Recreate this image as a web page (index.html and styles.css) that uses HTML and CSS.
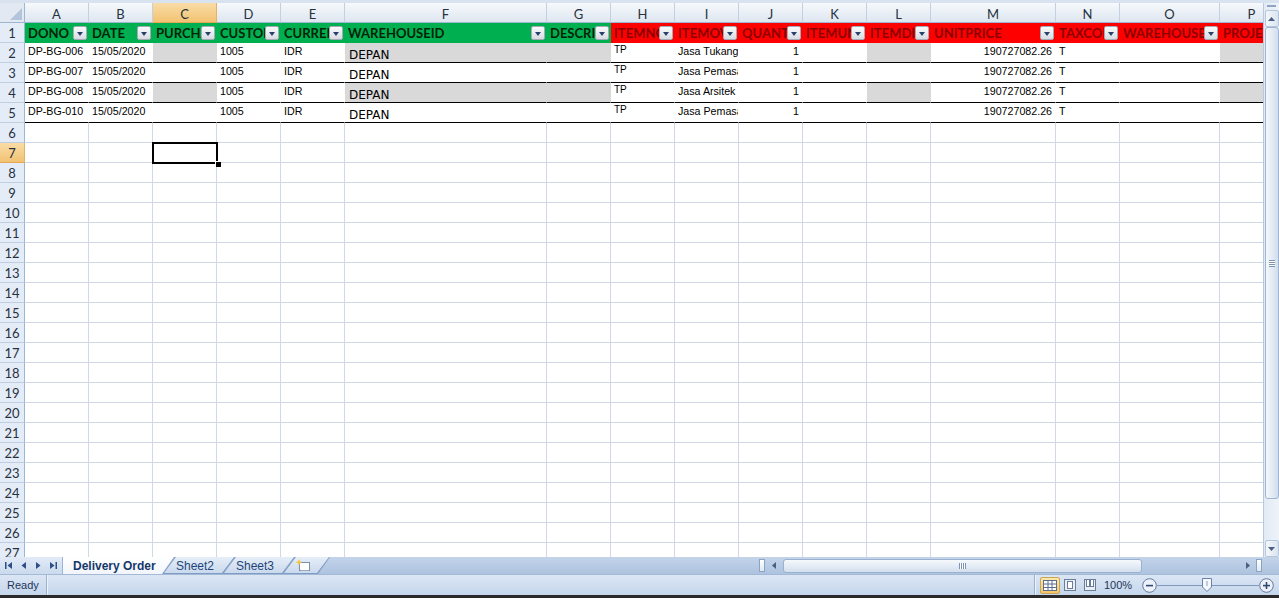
FILE: index.html
```html
<!DOCTYPE html>
<html lang="id">
  <head>
    <meta charset="UTF-8" />
    <title>Delivery Order</title>
    <link rel="stylesheet" href="styles.css">
  </head>

  <body>
    <div class="app">
      <div class="topstrip"></div>

      <div class="main">
        <div class="sheet">
          <table class="grid">
            <colgroup>
              <col class="w25"><col class="w64"><col class="w64"><col class="w64"><col class="w64"><col class="w64">
              <col class="w202"><col class="w64"><col class="w64"><col class="w64"><col class="w64"><col class="w64">
              <col class="w64"><col class="w125"><col class="w64"><col class="w100"><col class="w64">
            </colgroup>
            <thead>
              <tr>
                <th class="corner">
                  <svg width="24" height="19" viewBox="0 0 24 19"><polygon points="22,5 22,17 10,17" fill="#b4c5db"/></svg>
                </th>
                <th>A</th><th>B</th><th class="on">C</th><th>D</th><th>E</th><th>F</th><th>G</th><th>H</th>
                <th>I</th><th>J</th><th>K</th><th>L</th><th>M</th><th>N</th><th>O</th><th>P</th>
              </tr>
            </thead>
            <tbody>
              <tr class="hr">
                <th class="rh">1</th>
                <td class="g"><div class="hc"><span>DONO</span><i class="dd"></i></div></td>
                <td class="g"><div class="hc"><span>DATE</span><i class="dd"></i></div></td>
                <td class="g"><div class="hc"><span>PURCHASEORDERNO</span><i class="dd"></i></div></td>
                <td class="g"><div class="hc"><span>CUSTOMERID</span><i class="dd"></i></div></td>
                <td class="g"><div class="hc"><span>CURRENCY</span><i class="dd"></i></div></td>
                <td class="g"><div class="hc"><span>WAREHOUSEID</span><i class="dd"></i></div></td>
                <td class="g"><div class="hc"><span>DESCRIPTION</span><i class="dd"></i></div></td>
                <td class="r"><div class="hc"><span>ITEMNO</span><i class="dd"></i></div></td>
                <td class="r"><div class="hc"><span>ITEMOVDESC</span><i class="dd"></i></div></td>
                <td class="r"><div class="hc"><span>QUANTITY</span><i class="dd"></i></div></td>
                <td class="r"><div class="hc"><span>ITEMUNIT</span><i class="dd"></i></div></td>
                <td class="r"><div class="hc"><span>ITEMDISC</span><i class="dd"></i></div></td>
                <td class="r"><div class="hc"><span>UNITPRICE</span><i class="dd"></i></div></td>
                <td class="r"><div class="hc"><span>TAXCODES</span><i class="dd"></i></div></td>
                <td class="r"><div class="hc"><span>WAREHOUSEID</span><i class="dd"></i></div></td>
                <td class="r"><div class="hc"><span>PROJECTID</span><i class="dd"></i></div></td>
              </tr>

              <tr class="dr">
                <th class="rh">2</th>
                <td>DP-BG-006</td><td>15/05/2020</td><td class="gr"></td><td>1005</td><td>IDR</td>
                <td class="gr dp">DEPAN</td><td class="gr"></td><td class="tp">TP</td><td>Jasa Tukang</td>
                <td class="n">1</td><td></td><td class="gr"></td><td class="n">190727082.26</td><td>T</td><td></td><td class="gr"></td>
              </tr>
              <tr class="dr">
                <th class="rh">3</th>
                <td>DP-BG-007</td><td>15/05/2020</td><td></td><td>1005</td><td>IDR</td>
                <td class="dp">DEPAN</td><td></td><td class="tp">TP</td><td>Jasa Pemasangan</td>
                <td class="n">1</td><td></td><td></td><td class="n">190727082.26</td><td>T</td><td></td><td></td>
              </tr>
              <tr class="dr">
                <th class="rh">4</th>
                <td>DP-BG-008</td><td>15/05/2020</td><td class="gr"></td><td>1005</td><td>IDR</td>
                <td class="gr dp">DEPAN</td><td class="gr"></td><td class="tp">TP</td><td>Jasa Arsitek</td>
                <td class="n">1</td><td></td><td class="gr"></td><td class="n">190727082.26</td><td>T</td><td></td><td class="gr"></td>
              </tr>
              <tr class="dr">
                <th class="rh">5</th>
                <td>DP-BG-010</td><td>15/05/2020</td><td></td><td>1005</td><td>IDR</td>
                <td class="dp">DEPAN</td><td></td><td class="tp">TP</td><td>Jasa Pemasangan</td>
                <td class="n">1</td><td></td><td></td><td class="n">190727082.26</td><td>T</td><td></td><td></td>
              </tr>

              <tr><th class="rh">6</th><td></td><td></td><td></td><td></td><td></td><td></td><td></td><td></td><td></td><td></td><td></td><td></td><td></td><td></td><td></td><td></td></tr>
              <tr><th class="rh on">7</th><td></td><td></td><td class="cur"><div class="box"></div><div class="handle"></div></td><td></td><td></td><td></td><td></td><td></td><td></td><td></td><td></td><td></td><td></td><td></td><td></td><td></td></tr>
              <tr><th class="rh">8</th><td></td><td></td><td></td><td></td><td></td><td></td><td></td><td></td><td></td><td></td><td></td><td></td><td></td><td></td><td></td><td></td></tr>
              <tr><th class="rh">9</th><td></td><td></td><td></td><td></td><td></td><td></td><td></td><td></td><td></td><td></td><td></td><td></td><td></td><td></td><td></td><td></td></tr>
              <tr><th class="rh">10</th><td></td><td></td><td></td><td></td><td></td><td></td><td></td><td></td><td></td><td></td><td></td><td></td><td></td><td></td><td></td><td></td></tr>
              <tr><th class="rh">11</th><td></td><td></td><td></td><td></td><td></td><td></td><td></td><td></td><td></td><td></td><td></td><td></td><td></td><td></td><td></td><td></td></tr>
              <tr><th class="rh">12</th><td></td><td></td><td></td><td></td><td></td><td></td><td></td><td></td><td></td><td></td><td></td><td></td><td></td><td></td><td></td><td></td></tr>
              <tr><th class="rh">13</th><td></td><td></td><td></td><td></td><td></td><td></td><td></td><td></td><td></td><td></td><td></td><td></td><td></td><td></td><td></td><td></td></tr>
              <tr><th class="rh">14</th><td></td><td></td><td></td><td></td><td></td><td></td><td></td><td></td><td></td><td></td><td></td><td></td><td></td><td></td><td></td><td></td></tr>
              <tr><th class="rh">15</th><td></td><td></td><td></td><td></td><td></td><td></td><td></td><td></td><td></td><td></td><td></td><td></td><td></td><td></td><td></td><td></td></tr>
              <tr><th class="rh">16</th><td></td><td></td><td></td><td></td><td></td><td></td><td></td><td></td><td></td><td></td><td></td><td></td><td></td><td></td><td></td><td></td></tr>
              <tr><th class="rh">17</th><td></td><td></td><td></td><td></td><td></td><td></td><td></td><td></td><td></td><td></td><td></td><td></td><td></td><td></td><td></td><td></td></tr>
              <tr><th class="rh">18</th><td></td><td></td><td></td><td></td><td></td><td></td><td></td><td></td><td></td><td></td><td></td><td></td><td></td><td></td><td></td><td></td></tr>
              <tr><th class="rh">19</th><td></td><td></td><td></td><td></td><td></td><td></td><td></td><td></td><td></td><td></td><td></td><td></td><td></td><td></td><td></td><td></td></tr>
              <tr><th class="rh">20</th><td></td><td></td><td></td><td></td><td></td><td></td><td></td><td></td><td></td><td></td><td></td><td></td><td></td><td></td><td></td><td></td></tr>
              <tr><th class="rh">21</th><td></td><td></td><td></td><td></td><td></td><td></td><td></td><td></td><td></td><td></td><td></td><td></td><td></td><td></td><td></td><td></td></tr>
              <tr><th class="rh">22</th><td></td><td></td><td></td><td></td><td></td><td></td><td></td><td></td><td></td><td></td><td></td><td></td><td></td><td></td><td></td><td></td></tr>
              <tr><th class="rh">23</th><td></td><td></td><td></td><td></td><td></td><td></td><td></td><td></td><td></td><td></td><td></td><td></td><td></td><td></td><td></td><td></td></tr>
              <tr><th class="rh">24</th><td></td><td></td><td></td><td></td><td></td><td></td><td></td><td></td><td></td><td></td><td></td><td></td><td></td><td></td><td></td><td></td></tr>
              <tr><th class="rh">25</th><td></td><td></td><td></td><td></td><td></td><td></td><td></td><td></td><td></td><td></td><td></td><td></td><td></td><td></td><td></td><td></td></tr>
              <tr><th class="rh">26</th><td></td><td></td><td></td><td></td><td></td><td></td><td></td><td></td><td></td><td></td><td></td><td></td><td></td><td></td><td></td><td></td></tr>
              <tr><th class="rh">27</th><td></td><td></td><td></td><td></td><td></td><td></td><td></td><td></td><td></td><td></td><td></td><td></td><td></td><td></td><td></td><td></td></tr>
            </tbody>
          </table>
        </div>

        <div class="vscroll">
          <div class="vsplit"></div>
          <div class="vbtn">
            <svg width="7" height="4" viewBox="0 0 7 4"><polygon points="0,4 7,4 3.5,0" fill="#4b5f80"/></svg>
          </div>
          <div class="vthumb"><div class="grip-h"></div></div>
          <div class="vbtn down">
            <svg width="7" height="4" viewBox="0 0 7 4"><polygon points="0,0 7,0 3.5,4" fill="#4b5f80"/></svg>
          </div>
        </div>
      </div>

      <div class="tabbar">
        <div class="nav">
          <svg width="8" height="7" viewBox="0 0 8 7"><rect x="0" y="0" width="1.5" height="7" fill="#2c4f86"/><polygon points="7,0 7,7 2.5,3.5" fill="#2c4f86"/></svg>
          <svg width="6" height="7" viewBox="0 0 6 7"><polygon points="5,0 5,7 0.5,3.5" fill="#2c4f86"/></svg>
          <svg width="6" height="7" viewBox="0 0 6 7"><polygon points="1,0 1,7 5.5,3.5" fill="#2c4f86"/></svg>
          <svg width="8" height="7" viewBox="0 0 8 7"><polygon points="1,0 1,7 5.5,3.5" fill="#2c4f86"/><rect x="6.5" y="0" width="1.5" height="7" fill="#2c4f86"/></svg>
        </div>
        <div class="tabs">
          <div class="tab active"><span>Delivery Order</span></div>
          <div class="tab"><span>Sheet2</span></div>
          <div class="tab"><span>Sheet3</span></div>
          <div class="tab newtab">
            <span>
              <svg width="16" height="13" viewBox="0 0 16 13">
                <rect x="4.5" y="3.5" width="10" height="8" fill="#fff" stroke="#7a8fae"/>
                <line x1="6" y1="11.5" x2="14" y2="11.5" stroke="#9aabc4"/>
                <polygon points="4,0 5,2.5 7.5,3 5,4 4,6.5 3,4 0.5,3 3,2.5" fill="#f4c534"/>
              </svg>
            </span>
          </div>
        </div>
        <div class="tabfill"></div>
        <div class="hscroll">
          <div class="hsplit"></div>
          <div class="harrow left">
            <svg width="4" height="7" viewBox="0 0 4 7"><polygon points="4,0 4,7 0,3.5" fill="#4b5f80"/></svg>
          </div>
          <div class="hthumb"><div class="grip-v"></div></div>
          <div class="htrack"></div>
          <div class="harrow right">
            <svg width="4" height="7" viewBox="0 0 4 7"><polygon points="0,0 0,7 4,3.5" fill="#4b5f80"/></svg>
          </div>
          <div class="hsplit end"></div>
        </div>
        <div class="hcorner"></div>
      </div>

      <div class="status">
        <div class="ready">Ready</div>
        <div class="sep"></div>
        <div class="sfill"></div>
        <div class="sep"></div>
        <div class="views">
          <div class="view on">
            <svg width="14" height="11" viewBox="0 0 14 11">
              <rect x="0.5" y="0.5" width="13" height="10" fill="#fff" stroke="#5a6f8f"/>
              <path d="M5 0.5V10.5M9 0.5V10.5M0.5 4H13.5M0.5 7.5H13.5" stroke="#5a6f8f"/>
            </svg>
          </div>
          <div class="view">
            <svg width="12" height="12" viewBox="0 0 12 12">
              <rect x="0.5" y="0.5" width="11" height="11" fill="#e9eef5" stroke="#6a7d99"/>
              <rect x="3.5" y="2.5" width="5" height="7" fill="#fff" stroke="#6a7d99"/>
            </svg>
          </div>
          <div class="view">
            <svg width="12" height="12" viewBox="0 0 12 12">
              <rect x="0.5" y="0.5" width="11" height="11" fill="#e9eef5" stroke="#6a7d99"/>
              <rect x="2.5" y="0.5" width="3" height="7" fill="#fff" stroke="#6a7d99"/>
              <rect x="6.5" y="0.5" width="3" height="7" fill="#fff" stroke="#6a7d99"/>
            </svg>
          </div>
        </div>
        <div class="zoomval">100%</div>
        <div class="zbtn">
          <svg width="15" height="15" viewBox="0 0 15 15"><circle cx="7.5" cy="7.5" r="6.8" fill="#eef2f8" stroke="#6079a0"/><rect x="4" y="6.8" width="7" height="1.6" fill="#2f4a73"/></svg>
        </div>
        <div class="slider">
          <div class="sline"></div>
          <svg class="sknob" width="10" height="14" viewBox="0 0 10 14"><polygon points="0.5,0.5 9.5,0.5 9.5,9 5,13.5 0.5,9" fill="#f4f7fb" stroke="#6a82a8"/><line x1="5" y1="3" x2="5" y2="8" stroke="#8ea2c0"/></svg>
        </div>
        <div class="zbtn">
          <svg width="15" height="15" viewBox="0 0 15 15"><circle cx="7.5" cy="7.5" r="6.8" fill="#eef2f8" stroke="#6079a0"/><rect x="4" y="6.8" width="7" height="1.6" fill="#2f4a73"/><rect x="6.7" y="4" width="1.6" height="7" fill="#2f4a73"/></svg>
        </div>
      </div>

      <div class="taskbar"></div>
    </div>
  </body>
</html>
```

FILE: styles.css
```css
:root {
  --grid: #d0d7e5;
  --hdr-line: #9eb6ce;
  --green: #00b050;
  --red: #ff0000;
  --fill: #d9d9d9;
  --navy: #1f447a;
}

* {
  margin: 0;
  padding: 0;
  box-sizing: border-box;
}

html,
body {
  width: 1279px;
  height: 598px;
  overflow: hidden;
}

body {
  font-family: "Liberation Sans", Arial, sans-serif;
  background: #ffffff;
  color: #000;
}

.app {
  display: flex;
  flex-direction: column;
  height: 598px;
}

.topstrip {
  height: 3px;
  flex: none;
  background: #d9e3f0;
}

/* sheet area */
.main {
  display: flex;
  height: 554px;
  flex: none;
}

.sheet {
  width: 1263px;
  flex: none;
  overflow: hidden;
}

.grid {
  width: 1284px;
  table-layout: fixed;
  border-collapse: separate;
  border-spacing: 0;
}

.w25 { width: 25px; }
.w64 { width: 64px; }
.w100 { width: 100px; }
.w125 { width: 125px; }
.w202 { width: 202px; }

.grid tr {
  height: 20px;
}

.grid th,
.grid td {
  padding: 0;
  border-right: 1px solid var(--grid);
  border-bottom: 1px solid var(--grid);
  overflow: hidden;
  white-space: nowrap;
  font-weight: normal;
}

.grid thead th {
  font-family: Lato, "Liberation Sans", sans-serif;
  font-size: 13px;
  color: #27313d;
  text-align: center;
  padding-top: 2px;
  background: linear-gradient(#f6f9fc, #dee6f0);
  border-right-color: #c3d0e0;
  border-bottom-color: var(--hdr-line);
}

.grid thead th.corner {
  padding: 0;
  background: #e2e9f3;
  border-right-color: var(--hdr-line);
}

.corner svg {
  display: block;
}

.grid thead th.on,
.grid th.rh.on {
  background: linear-gradient(#f9dca6, #f2c372);
  border-right-color: #e3b16b;
  border-bottom-color: #e3a75a;
}

.grid th.rh {
  font-family: Lato, "Liberation Sans", sans-serif;
  font-size: 13px;
  color: #27313d;
  text-align: center;
  background: #e4ecf7;
  border-right-color: var(--hdr-line);
  border-bottom-color: #bfcde0;
}

/* header row with autofilter */
.hr td {
  border-right-color: transparent;
  border-bottom-color: transparent;
}

.hr td.g {
  background: var(--green);
  color: #042208;
}

.hr td.r {
  background: var(--red);
  color: #8a0000;
}

.hc {
  display: flex;
  align-items: center;
  height: 19px;
}

.hc span {
  flex: 1;
  min-width: 0;
  overflow: hidden;
  padding-left: 3px;
  font-family: Lato, "Liberation Sans", sans-serif;
  font-weight: 700;
  font-size: 13px;
}

.dd {
  position: relative;
  flex: none;
  width: 14px;
  height: 14px;
  margin-right: 1px;
  border: 1px solid #a4abb6;
  border-radius: 2px;
  background: linear-gradient(#fbfbfc, #d8dce2);
}

.dd::after {
  content: "";
  position: absolute;
  left: 3px;
  top: 5px;
  border-left: 3.5px solid transparent;
  border-right: 3.5px solid transparent;
  border-top: 4px solid #27416c;
}

/* data rows */
.dr td {
  background: #ffffff;
  border-right-color: transparent;
  border-bottom-color: #000000;
  vertical-align: top;
  padding: 2px 0 0 3px;
  font-size: 8pt;
  line-height: 12px;
}

.dr td.gr {
  background: var(--fill);
}

.dr td.n {
  text-align: right;
  padding-right: 3px;
}

.dr td.dp {
  font-family: "DejaVu Sans", sans-serif;
  font-size: 12px;
  line-height: 14px;
  padding-top: 5px;
  padding-left: 4px;
}

.dr td.tp {
  font-size: 7.5pt;
  padding-top: 1px;
}

/* active cell */
.grid td.cur {
  position: relative;
  overflow: visible;
}

.cur .box {
  position: absolute;
  left: -1px;
  top: -1px;
  width: 66px;
  height: 22px;
  border: 2px solid #000;
}

.cur .handle {
  position: absolute;
  left: 62px;
  top: 18px;
  width: 6px;
  height: 6px;
  background: #000;
  border-left: 1px solid #fff;
  border-top: 1px solid #fff;
}

/* vertical scrollbar */
.vscroll {
  width: 16px;
  flex: none;
  display: flex;
  flex-direction: column;
  align-items: center;
  background: linear-gradient(to right, #e2eaf4, #eef3f9);
  border-left: 1px solid #b9c9dd;
}

.vsplit {
  width: 100%;
  height: 7px;
  flex: none;
  position: relative;
}

.vsplit::after {
  content: "";
  position: absolute;
  left: 3px;
  right: 3px;
  top: 2px;
  height: 2px;
  background: #8fa4c1;
}

.vbtn {
  width: 14px;
  height: 17px;
  flex: none;
  display: flex;
  align-items: center;
  justify-content: center;
  border: 1px solid #b5c5da;
  border-radius: 2px;
  background: linear-gradient(to right, #f4f7fb, #dae4f0);
}

.vbtn.down {
  margin-top: auto;
}

.vthumb {
  width: 14px;
  height: 472px;
  flex: none;
  display: flex;
  align-items: center;
  justify-content: center;
  border: 1px solid #9fb4cf;
  border-radius: 3px;
  background: linear-gradient(to right, #f5f8fc, #d2deed);
}

.grip-h {
  width: 6px;
  height: 7px;
  background: repeating-linear-gradient(#7d93b3 0 1px, #ffffff 1px 2px);
}

/* sheet tabs + horizontal scrollbar */
.tabbar {
  height: 17px;
  flex: none;
  display: flex;
  background: linear-gradient(#c3d4ea, #aec3df);
}

.nav {
  width: 63px;
  flex: none;
  display: flex;
  align-items: center;
  gap: 8px;
  padding-left: 5px;
  background: linear-gradient(#e2eaf6, #cbdaee);
  border-right: 1px solid #9fb4d2;
}

.nav svg {
  display: block;
}

.tabs {
  display: flex;
  flex: none;
}

.tab {
  position: relative;
  height: 17px;
  width: 72px;
  margin-left: -12px;
  padding-left: 13px;
  display: flex;
  align-items: center;
  background: #7f9cc4;
  clip-path: polygon(0 100%, 12px 0, 100% 0, calc(100% - 12px) 100%);
  font-size: 12px;
  color: var(--navy);
}

.tab::before {
  content: "";
  position: absolute;
  top: 0;
  bottom: 1px;
  left: 1px;
  right: 1px;
  clip-path: polygon(0 100%, 12px 0, 100% 0, calc(100% - 12px) 100%);
  background: linear-gradient(#e6eef8, #cad9ed);
}

.tab span {
  position: relative;
}

.tab.active {
  width: 112px;
  margin-left: 0;
  padding-left: 10px;
  font-weight: 700;
  color: #15386b;
  clip-path: polygon(0 0, 100% 0, calc(100% - 12px) 100%, 0 100%);
}

.tab.active::before {
  left: 0;
  bottom: 0;
  clip-path: polygon(0 0, 100% 0, calc(100% - 12px) 100%, 0 100%);
  background: linear-gradient(#ffffff, #f1f5fb);
}

.tab.newtab {
  width: 47px;
  padding-left: 12px;
}

.newtab svg {
  display: block;
}

.tabfill {
  flex: 1;
}

.hscroll {
  width: 505px;
  flex: none;
  display: flex;
  align-items: center;
  padding-left: 1px;
}

.hsplit {
  width: 6px;
  height: 13px;
  flex: none;
  border: 1px solid #8aa3c5;
  background: linear-gradient(#ffffff, #e0e8f2);
}

.hsplit.end {
  margin-left: 1px;
}

.harrow {
  flex: none;
  height: 13px;
  display: flex;
  align-items: center;
  justify-content: center;
}

.harrow.left {
  width: 18px;
}

.harrow.right {
  width: 15px;
}

.harrow svg {
  display: block;
}

.hthumb {
  width: 359px;
  height: 14px;
  flex: none;
  display: flex;
  align-items: center;
  justify-content: center;
  border: 1px solid #9ab1cf;
  border-radius: 3px;
  background: linear-gradient(#f6f9fc, #d3dfee);
}

.grip-v {
  width: 7px;
  height: 6px;
  background: repeating-linear-gradient(to right, #7d93b3 0 1px, #ffffff 1px 2px);
}

.htrack {
  width: 98px;
  flex: none;
}

.hcorner {
  width: 16px;
  flex: none;
}

/* status bar */
.status {
  height: 21px;
  flex: none;
  display: flex;
  align-items: center;
  background: linear-gradient(#dbe6f4, #c5d6ec);
  border-top: 1px solid #a3b9d6;
  font-size: 11px;
  color: #1e3658;
}

.ready {
  width: 46px;
  padding-left: 7px;
}

.sep {
  width: 2px;
  height: 20px;
  flex: none;
  border-left: 1px solid #9cb1cd;
  border-right: 1px solid #eef3fa;
}

.sfill {
  flex: 1;
}

.views {
  display: flex;
  margin-left: 4px;
}

.view {
  width: 20px;
  height: 17px;
  display: flex;
  align-items: center;
  justify-content: center;
}

.view svg {
  display: block;
}

.view.on {
  background: linear-gradient(#fde8a8, #f7c664);
  border: 1px solid #c9a45c;
  border-radius: 2px;
}

.zoomval {
  width: 29px;
  margin-left: 4px;
}

.zbtn {
  width: 15px;
  height: 15px;
  flex: none;
}

.zoomval + .zbtn {
  margin-left: 9px;
}

.zbtn svg {
  display: block;
}

.slider {
  width: 102px;
  height: 15px;
  flex: none;
  display: flex;
  align-items: center;
  position: relative;
}

.sline {
  width: 100%;
  height: 1px;
  background: #7f98bd;
}

.sknob {
  position: absolute;
  left: 45px;
  top: 0;
}

.status > .zbtn:last-child {
  margin-right: 5px;
}

.taskbar {
  height: 3px;
  flex: none;
  background: #2a2a2a;
}
```
